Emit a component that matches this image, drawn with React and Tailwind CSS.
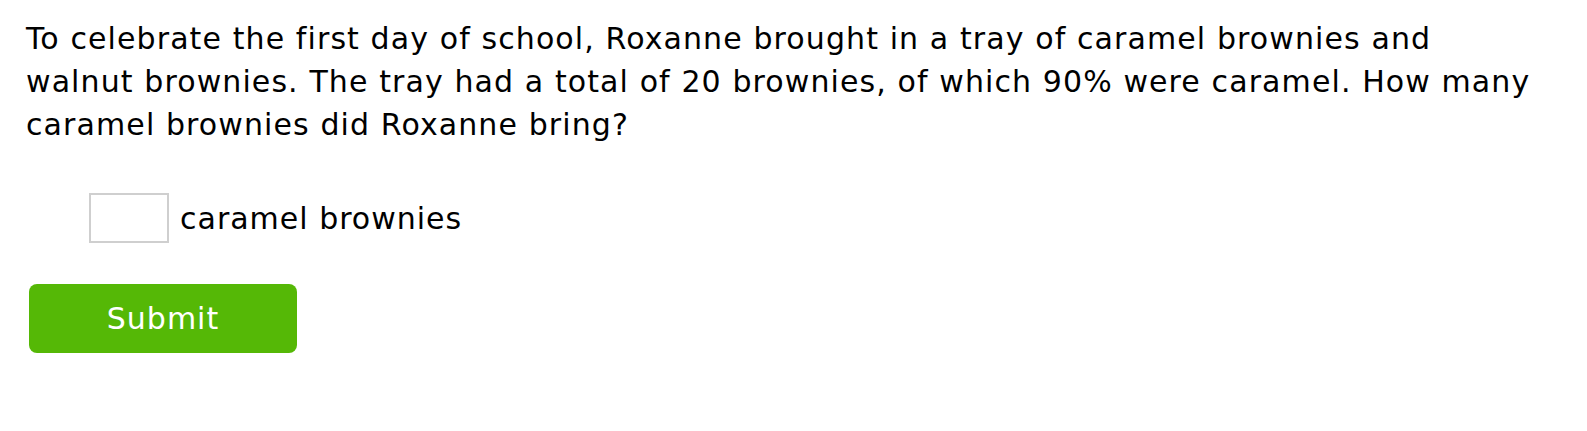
export default function App() {
  return (
    <div className="min-h-[431px] bg-white text-black" style={{ fontFamily: '"DejaVu Sans", Verdana, sans-serif' }}>
      <div className="px-[26px] pt-[17px]">
        <p className="text-[30px] leading-[43px] tracking-[1.1px]">
          To celebrate the first day of school, Roxanne brought in a tray of caramel brownies and
          <br />
          walnut brownies. The tray had a total of 20 brownies, of which 90% were caramel. How many
          <br />
          caramel brownies did Roxanne bring?
        </p>

        <div className="mt-[47px] flex items-center gap-[11px] pl-[63px]">
          <input
            type="text"
            aria-label="caramel brownies"
            className="h-[50px] w-[80px] border-2 border-[#cfcfcf] bg-white px-2 text-[30px] outline-none"
          />
          <span className="text-[30px] leading-[43px] tracking-[1px]">caramel brownies</span>
        </div>

        <button className="mt-[41px] ml-[3px] h-[69px] w-[268px] rounded-[8px] bg-[#55b806] text-[30px] tracking-[1px] text-white">
          Submit
        </button>
      </div>
    </div>
  );
}
